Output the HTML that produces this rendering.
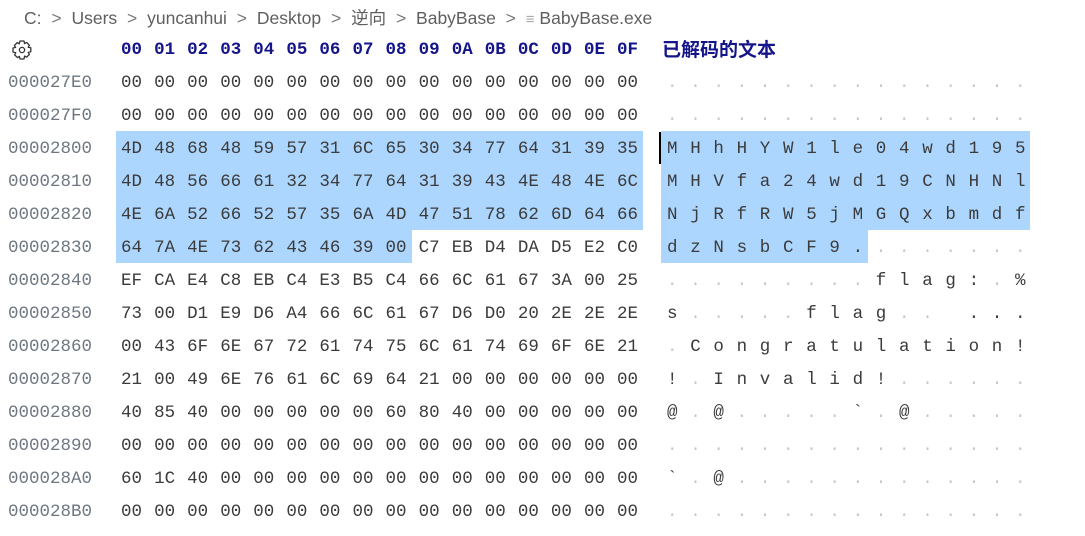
<!DOCTYPE html>
<html><head><meta charset="utf-8"><style>
body{margin:0;background:#fff;width:1085px;height:536px;overflow:hidden;position:relative;font-family:"Liberation Mono",monospace;}
.bc{position:absolute;top:5px;left:24px;font:17.5px "Liberation Sans","Noto Sans CJK SC",sans-serif;color:#5f5f5f;white-space:nowrap;}
.bc .s{color:#777;margin:0 5px;}
.c{position:absolute;font-size:17.5px;line-height:33px;color:#3b3b3b;white-space:pre;}
.a{color:#6e7781}
.h{color:#15158a;font-weight:bold}
.g{color:#c8c8c8}
.hl{position:absolute;background:#add6fe}
</style></head><body>
<div class="bc">C: <span class="s">&gt;</span> Users <span class="s">&gt;</span> yuncanhui <span class="s">&gt;</span> Desktop <span class="s">&gt;</span> 逆向 <span class="s">&gt;</span> BabyBase <span class="s">&gt;</span> <span style="color:#aaa;font-size:15px">&#8801;</span> BabyBase.exe</div>
<svg style="position:absolute;left:11px;top:39px" width="22" height="22" viewBox="0 0 22 22"><path d="M9 2h4l.6 2.6 2-1.2 2.8 2.8-1.2 2 2.6.6v4l-2.6.6 1.2 2-2.8 2.8-2-1.2L13 20H9l-.6-2.6-2 1.2-2.8-2.8 1.2-2L2 13V9l2.6-.6-1.2-2 2.8-2.8 2 1.2z" fill="none" stroke="#333" stroke-width="1.3" stroke-linejoin="round"/><circle cx="11" cy="11" r="2.6" fill="none" stroke="#333" stroke-width="1.3"/></svg>
<div class="hl" style="left:116px;top:131px;width:527px;height:99px"></div>
<div class="hl" style="left:116px;top:230px;width:296px;height:33px"></div>
<div class="hl" style="left:661px;top:131px;width:369px;height:99px"></div>
<div class="hl" style="left:661px;top:230px;width:207px;height:33px"></div>
<div style="position:absolute;left:659px;top:132px;width:2px;height:32px;background:#000"></div>
<div class="c h" style="left:662px;top:34px;font-family:'Liberation Sans','Noto Sans CJK SC',sans-serif;font-size:19px">已解码的文本</div>
<div id="g"></div>
<script>
var rows=[
["000027E0","00 00 00 00 00 00 00 00 00 00 00 00 00 00 00 00"],
["000027F0","00 00 00 00 00 00 00 00 00 00 00 00 00 00 00 00"],
["00002800","4D 48 68 48 59 57 31 6C 65 30 34 77 64 31 39 35"],
["00002810","4D 48 56 66 61 32 34 77 64 31 39 43 4E 48 4E 6C"],
["00002820","4E 6A 52 66 52 57 35 6A 4D 47 51 78 62 6D 64 66"],
["00002830","64 7A 4E 73 62 43 46 39 00 C7 EB D4 DA D5 E2 C0"],
["00002840","EF CA E4 C8 EB C4 E3 B5 C4 66 6C 61 67 3A 00 25"],
["00002850","73 00 D1 E9 D6 A4 66 6C 61 67 D6 D0 20 2E 2E 2E"],
["00002860","00 43 6F 6E 67 72 61 74 75 6C 61 74 69 6F 6E 21"],
["00002870","21 00 49 6E 76 61 6C 69 64 21 00 00 00 00 00 00"],
["00002880","40 85 40 00 00 00 00 00 60 80 40 00 00 00 00 00"],
["00002890","00 00 00 00 00 00 00 00 00 00 00 00 00 00 00 00"],
["000028A0","60 1C 40 00 00 00 00 00 00 00 00 00 00 00 00 00"],
["000028B0","00 00 00 00 00 00 00 00 00 00 00 00 00 00 00 00"]];
var h='';
function cell(x,y,t,cls){h+='<div class="c '+cls+'" style="left:'+x+'px;top:'+y+'px">'+t+'</div>';}
for(var i=0;i<16;i++){cell(121+i*33.07,34,('0'+i.toString(16).toUpperCase()).slice(-2),'h');}
rows.forEach(function(r,ri){
 var y=67+ri*33;
 cell(8,y,r[0],'a');
 r[1].split(' ').forEach(function(b,i){
  cell(121+i*33.07,y,b,'');
  var v=parseInt(b,16),ch,cls='';
  var sel=(ri>=2&&ri<=4)||(ri==5&&i<=8);
  if(v>32&&v<127){ch=String.fromCharCode(v);if(ch=='<')ch='&lt;';if(ch=='&')ch='&amp;';}
  else if(v==32){ch=' ';}
  else{ch='.';cls=sel?'':'g';}
  cell(667+i*23.2,y,ch,cls);
 });
});
document.getElementById('g').innerHTML=h;
</script>
</body></html>
